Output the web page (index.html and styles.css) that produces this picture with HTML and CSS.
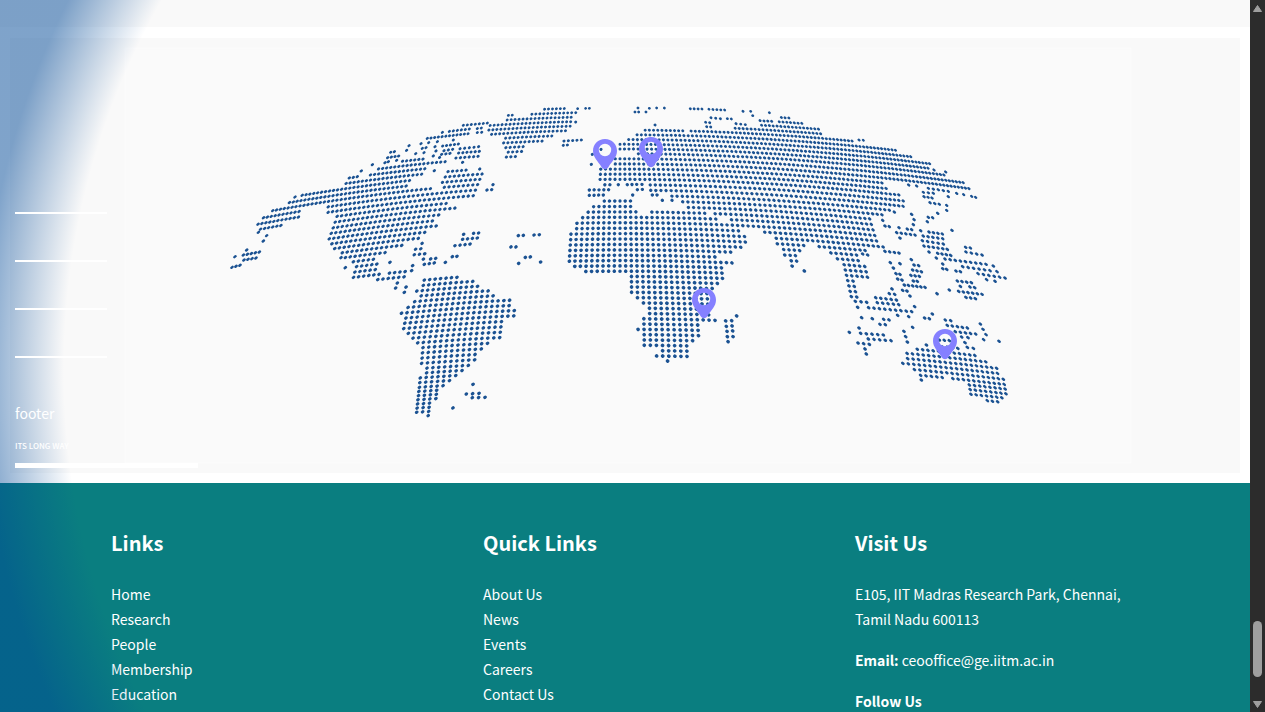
FILE: index.html
```html
<!DOCTYPE html>
<html lang="en">
<head>
<meta charset="utf-8">
<title>Global Engagement</title>
<link rel="stylesheet" href="styles.css">
</head>
<body>
<div class="window">
  <div class="page">
    <main class="content">
      <div class="previous-section"></div>
      <section class="map-section" aria-label="Our locations">
        <svg class="map" viewBox="10 38 1230 435" role="img" aria-label="World map">
          <rect class="map-inner" x="125" y="48" width="1006" height="415"/>
          <g id="dots" class="dots"></g>
          <defs>
            <path id="pin" fill-rule="evenodd" d="M0-12C7-12 12-6.600 12 0C12 6.500 7 10 3.500 16C1.500 19 -1.500 19 -3.500 16C-7 10 -12 6.500 -12 0C-12-6.600 -7-12 0-12ZM0-7.200A6.200 6.200 0 1 0 0 5.200A6.200 6.200 0 1 0 0-7.200Z"/>
          </defs>
          <g class="pins">
            <use href="#pin" x="605" y="151"/>
            <use href="#pin" x="651" y="149"/>
            <use href="#pin" x="704" y="300"/>
            <use href="#pin" x="945" y="341"/>
          </g>
        </svg>
      </section>
    </main>
    <footer class="footer">
      <section class="column">
        <h2>Links</h2>
        <ul>
          <li><a href="#">Home</a></li>
          <li><a href="#">Research</a></li>
          <li><a href="#">People</a></li>
          <li><a href="#">Membership</a></li>
          <li><a href="#">Education</a></li>
        </ul>
      </section>
      <section class="column">
        <h2>Quick Links</h2>
        <ul>
          <li><a href="#">About Us</a></li>
          <li><a href="#">News</a></li>
          <li><a href="#">Events</a></li>
          <li><a href="#">Careers</a></li>
          <li><a href="#">Contact Us</a></li>
        </ul>
      </section>
      <section class="column">
        <h2>Visit Us</h2>
        <p>E105, IIT Madras Research Park, Chennai,<br>Tamil Nadu 600113</p>
        <p><strong>Email:</strong> <a href="mailto:ceooffice@ge.iitm.ac.in">ceooffice@ge.iitm.ac.in</a></p>
        <p><strong>Follow Us</strong></p>
      </section>
    </footer>
    <aside class="drawer">
      <div class="rule"></div>
      <div class="rule"></div>
      <div class="rule"></div>
      <div class="rule"></div>
      <p class="drawer-title">footer</p>
      <p class="drawer-note">ITS LONG WAY</p>
      <div class="bar"></div>
    </aside>
  </div>
  <div class="scrollbar" aria-hidden="true">
    <svg class="arrow" viewBox="0 0 15 15"><path d="M7.500 5.500L11.500 11.500H3.500Z"/></svg>
    <div class="track"><div class="thumb"></div></div>
    <svg class="arrow" viewBox="0 0 15 15"><path d="M7.500 10.500L3.500 4.500H11.500Z"/></svg>
  </div>
</div>
<script src="map.js"></script>
</body>
</html>
```

FILE: styles.css
```css
* {
  box-sizing: border-box;
}

body {
  margin: 0;
  background: #fff;
  color: #fff;
  font: 14px/25px "Noto Sans CJK SC", "Open Sans", sans-serif;
}

a {
  color: inherit;
  text-decoration: none;
}

.window {
  display: grid;
  grid-template-columns: 1fr 15px;
  height: 100vh;
  overflow: hidden;
}

.page {
  position: relative;
  display: flex;
  flex-direction: column;
  min-height: 0;
  overflow: hidden;
}

.content {
  flex: none;
}

.previous-section {
  height: 27px;
  background: #f9f9f9;
}

.map-section {
  padding: 11px 10px 10px;
}

.map {
  display: block;
  width: 100%;
  background: #f9f9f9;
}

.map-inner {
  fill: #fafafa;
  stroke: #fcfcfc;
}

.dots {
  fill: none;
  stroke: #1b5292;
  stroke-linecap: round;
}

.pins {
  fill: #8580ff;
}

.footer {
  flex: 1 0 auto;
  display: grid;
  grid-template-columns: repeat(3, 1fr);
  padding: 46px 23px 0 111px;
  background: #0a7e80;
}

.column h2 {
  margin: 0 0 25px;
  font-size: 20px;
  line-height: 28px;
  font-weight: 700;
}

.column ul {
  margin: 0;
  padding: 0;
  list-style: none;
}

.column p {
  margin: 0 0 16px;
}

.drawer {
  position: absolute;
  inset: 0;
  padding: 212px 15px 0;
  pointer-events: none;
  background: radial-gradient(circle at 811px 370px, rgba(0, 72, 150, 0) 747px, rgba(0, 72, 150, .5) 830px);
}

.rule {
  width: 92px;
  height: 2px;
  margin-bottom: 46px;
  background: #fff;
}

.drawer-title {
  margin: 0 0 18px;
  font-size: 14px;
  line-height: 18px;
}

.drawer-note {
  margin: 0 0 11px;
  font-size: 8px;
  line-height: 12px;
  font-weight: 500;
}

.bar {
  width: 183px;
  height: 5px;
  background: #fff;
}

.scrollbar {
  display: flex;
  flex-direction: column;
  background: #2c2c2c;
}

.arrow {
  width: 15px;
  height: 15px;
  fill: #9f9f9f;
  stroke: #9f9f9f;
  stroke-linejoin: round;
}

.track {
  flex: 1;
  display: flex;
  flex-direction: column;
  justify-content: flex-end;
  padding: 0 3px 20px;
}

.thumb {
  height: 56px;
  border-radius: 5px;
  background: #9f9f9f;
}
```

FILE: map.js
```js
// Land outlines and islands, in thirds of a map unit from each region's origin.
// land: closed outlines. runs: rows of dots [x1, y1, x2, y2, count]. spots: single dots.
const regions = [
  {
    name: 'North America', x: 220, y: 90,
    land: [
      [105,398,105,420,135,418,190,408,190,392,240,382,240,362,312,350,318,380,345,380,335,420,322,445,335,480,365,485,365,495,385,510,405,540,398,565,478,558,470,500,525,475,605,450,600,435,650,410,640,390,660,375,655,362,720,358,715,350,695,345,690,330,775,325,770,300,785,290,795,250,785,225,775,222,765,240,720,240,720,228,680,232,665,260,660,300,645,300,645,285,565,290,580,265,612,250,605,238,670,228,680,210,660,200,610,215,620,200,560,205,530,222,470,235,450,255,380,270,365,285,320,300,245,315,200,340,150,365,130,380],
      [600,452,583,470,573,505,610,510,618,480,608,455],
      [468,574,562,567,555,540,525,535,525,545,470,556]
    ],
    runs: [
      [70,495,118,486,5],[72,510,108,504,4],[36,532,60,526,3],[613,523,643,519,3],[632,507,647,505,2],[697,500,711,499,2],
      [705,467,750,462,4],[728,448,772,444,4],[761,430,776,429,2],[801,300,815,299,2],[388,264,412,260,3],[424,243,434,241,2],
      [495,218,505,215,2],[503,203,536,198,4],[512,187,523,185,2],[530,211,541,210,2],[607,175,618,173,2],[622,145,744,131,12],
      [688,124,748,117,6],[730,106,802,99,7],[772,128,838,122,6],[772,116,784,114,2],[668,168,715,162,5],[672,182,698,178,3],
      [665,193,690,190,3],[720,176,776,170,5],[716,189,778,184,6],[708,204,774,199,6]
    ],
    spots: [80,480,45,500,130,453,140,437,150,422,115,427,175,415,225,321,363,503,376,533,510,517,578,527,575,542,532,579,527,594,558,591,676,517,731,433,819,284,643,242,457,224,560,181,567,167,587,191,603,161,612,188,667,127,700,150,688,160,652,155,648,183,640,198,645,170,626,158,728,217]
  },
  {
    name: 'Greenland and Atlantic', x: 390, y: 90,
    land: [
      [298,98,350,90,350,76,380,75,385,82,410,80,425,60,442,60,455,65,455,56,523,55,525,65,567,65,565,75,545,80,550,90,535,128,490,135,490,145,440,160,405,170,400,185,380,190,375,210,353,210,340,180,340,150,330,135,260,132,290,120]
    ],
    runs: [[587,55,598,55,2],[522,153,574,150,5],[520,166,532,165,2],[385,437,400,436,2],[432,435,448,434,2],[363,471,378,471,2],[406,502,421,501,2],[598,300,656,299,5],[598,316,640,315,4]],
    spots: [563,56,557,96,386,520,452,516,607,193,604,223,633,178]
  },
  {
    name: 'Eurasia and Africa', x: 560, y: 90,
    land: [
      [115,232,155,230,160,200,225,200,225,185,180,182,170,156,195,155,195,142,222,138,222,128,245,126,245,114,330,114,375,116,378,128,393,128,393,116,440,118,520,118,525,108,560,105,600,105,590,90,620,90,640,95,655,95,655,80,682,82,725,100,780,118,790,133,832,138,890,155,990,173,1050,198,1118,220,1112,238,1185,266,1220,283,1232,304,1200,304,1100,285,1050,275,975,270,980,295,1025,310,1030,330,1055,345,1010,358,970,365,980,382,930,387,950,410,960,450,974,472,925,475,930,494,885,498,915,525,925,562,890,564,885,580,903,622,865,622,852,580,860,550,845,522,845,508,810,504,800,480,765,472,760,460,740,455,735,482,703,487,717,527,693,530,670,502,660,478,638,450,635,430,600,425,590,410,520,408,515,392,470,375,375,350,360,322,325,318,300,305,268,303,265,275,150,275,150,290,128,290,113,258],
      [22,518,25,430,45,410,65,375,95,345,140,326,212,326,214,358,240,357,243,368,275,368,275,358,375,358,470,375,490,395,540,412,557,430,557,455,545,472,520,487,472,490,475,508,527,515,495,537,502,566,466,588,455,600,460,660,468,697,430,702,430,725,400,750,397,772,384,805,330,808,325,817,315,808,276,808,276,792,295,780,252,772,252,727,234,725,234,683,252,680,250,635,235,625,198,596,200,560,185,548,140,550,85,548,50,532]
    ],
    runs: [[202,284,230,283,3],[232,299,247,298,2],[277,315,291,315,2],[225,66,236,66,2],[391,56,426,57,4],[447,58,494,60,5],[453,83,481,86,3],[502,86,514,87,2],[437,97,449,98,2],[440,110,452,111,2],[528,101,556,104,3],[285,798,378,799,6],[122,545,139,544,2]],
    spots: [175,284,246,283,218,315,307,331,336,331,258,66,234,54,268,55,290,54,313,54,285,105,549,64,572,64,578,77,628,68,323,813,88,545,190,545,208,593]
  },
  {
    name: 'East Asia', x: 780, y: 120,
    runs: [
      [237,60,250,61,2],[575,229,587,232,2],[430,217,460,220,3],[432,230,456,234,3],[450,248,478,253,3],[445,292,458,293,2],
      [445,205,505,214,5],[315,318,328,320,2],[382,327,395,329,2],[350,338,405,345,5],[447,336,487,342,4],[415,346,488,356,6],[427,362,490,372,5],
      [432,378,502,388,6],[473,400,512,406,4],[557,382,571,384,2],[558,396,606,405,4],[495,417,618,433,9],[548,440,630,452,6],
      [488,446,500,448,2],[528,453,541,455,2],[594,461,675,474,6],[315,394,357,399,4],[402,435,416,437,2],[398,450,424,455,3],
      [348,461,360,463,2],[393,466,418,469,3],[373,495,435,502,6],[400,483,412,484,2],[368,511,381,513,2],[532,483,574,488,4],
      [570,501,584,503,2],[536,514,606,523,6],[558,532,586,536,3],[248,402,263,405,2]
    ],
    spots: [351,90,462,150,497,156,530,220,551,224,386,195,410,198,505,230,500,256,500,271,473,280,442,305,395,283,402,299,400,314,516,331,343,276,308,301,357,323,422,332,360,354,447,396,469,414,488,432,640,438,651,455,620,479,645,484,331,428,360,431,394,419,340,444,353,477,366,480,390,528,336,507,541,499,471,521,508,510,73,453]
  },
  {
    name: 'Oceania', x: 830, y: 240,
    land: [
      [235,330,285,313,310,318,380,318,400,333,440,335,445,350,480,356,480,375,510,388,520,410,538,455,525,475,510,487,435,477,410,458,405,432,365,427,355,412,340,424,275,418,270,432,255,400,235,380,210,365,228,348]
    ],
    runs: [
      [56,166,86,168,3],[76,184,110,187,3],[137,173,199,180,5],[178,161,194,163,2],[142,188,206,194,5],
      [116,203,245,215,9],[161,238,177,240,2],[150,253,166,254,2],[92,280,160,285,5],[115,297,183,302,5],[84,309,118,313,3],
      [284,234,298,236,2],[346,240,362,242,2],[352,256,412,264,5],[376,275,437,282,5],[395,291,414,293,2],[412,322,430,325,2],[328,300,358,302,3]
    ],
    spots: [83,202,186,146,254,200,203,226,236,230,95,233,127,236,87,264,58,277,105,327,109,342,222,274,227,290,232,306,248,262,307,222,239,167,405,308,451,252,459,268,468,284,461,299,507,304,299,313]
  },
  {
    name: 'South America', x: 380, y: 260,
    land: [
      [125,58,235,48,240,60,280,62,295,80,325,92,340,108,350,120,405,120,402,145,417,155,395,178,380,180,372,242,335,245,330,258,290,290,290,302,250,335,210,365,190,384,170,397,168,427,150,440,148,467,118,467,98,457,106,350,130,345,130,320,113,314,123,260,150,252,110,257,95,237,68,210,72,180,63,160,85,140,90,122,110,112,98,95,122,85]
    ],
    runs: [[259,402,297,400,3],[277,413,315,412,3]],
    spots: [279,373,219,444,79,81,73,97,47,84,52,68,411,155,106,452,106,438]
  },
  {
    name: 'Madagascar', x: 600, y: 250,
    runs: [[377,213,395,212,2],[379,229,396,228,2],[381,244,398,243,2],[382,260,399,260,2]],
    spots: [410,198,384,275]
  }
];

const CENTER = 620;
const CURVE = 108;

function between(stops, value) {
  for (let i = 1; i < stops.length; i++) {
    const [a, from] = stops[i - 1];
    const [b, to] = stops[i];
    if (value <= b) return from + (to - from) * (value - a) / (b - a);
  }
  return stops[stops.length - 1][1];
}

const rowY = [[-14, 46], [0, 107.7], [5, 130], [10, 153.7], [15, 179.3], [29, 255.3], [49, 361], [53, 380], [62, 418]];
const gap = [[-14, 3.4], [5, 4.2], [18, 5.2], [29, 5.6], [44, 6.05], [62, 6.3]];
const bendWest = [[-14, 0.00026], [20, 0.00026], [62, 0.00016]];
const bendEast = [[-14, 0.00021], [20, 0.0002], [62, 0.00014]];

function place(row, col) {
  const x = CENTER + between(gap, row) * CURVE * Math.sin(col / CURVE);
  const bend = between(col < 0 ? bendWest : bendEast, row);
  return [x, between(rowY, row) + bend * (x - CENTER) ** 2];
}

function inside(outline, x, y) {
  let hit = false;
  for (let i = 0, j = outline.length - 2; i < outline.length; j = i, i += 2) {
    const [xi, yi, xj, yj] = [outline[i], outline[i + 1], outline[j], outline[j + 1]];
    if ((yi > y) !== (yj > y) && x < (xj - xi) * (y - yi) / (yj - yi) + xi) hit = !hit;
  }
  return hit;
}

const paths = new Map();
const placed = [];

// Dots lean along their meridian and shrink toward the pole and the sides.
function dot(x, y) {
  placed.push([x, y]);
  const lean = (CENTER - x) / 390;
  const size = between([[105, 2.7], [180, 3.2], [270, 3.6], [420, 3.6]], y) * (1 - 0.32 * Math.abs(lean));
  const width = size.toFixed(1);
  const dx = lean * 0.6;
  const dy = -Math.abs(lean) * 0.5;
  const d = `M${(x - dx).toFixed(1)} ${(y - dy).toFixed(1)}l${(dx * 2).toFixed(2)} ${(dy * 2 - 0.01).toFixed(2)}`;
  paths.set(width, (paths.get(width) || '') + d);
}

const outlines = regions.flatMap(r => (r.land || []).map(l => l.map((v, i) => (i % 2 ? r.y : r.x) + v / 3)));
for (let row = -14; row <= 62; row++) {
  for (let col = -120; col <= 120; col++) {
    const [x, y] = place(row, col);
    if (outlines.some(o => inside(o, x, y))) dot(x, y);
  }
}

function single(x, y) {
  if (!placed.some(([a, b]) => Math.hypot(a - x, b - y) < 3.4)) dot(x, y);
}

for (const r of regions) {
  for (const [x1, y1, x2, y2, n] of r.runs || []) {
    for (let i = 0; i < n; i++) {
      const t = i / (n - 1);
      single(r.x + (x1 + (x2 - x1) * t) / 3, r.y + (y1 + (y2 - y1) * t) / 3);
    }
  }
  for (let i = 0; i < (r.spots || []).length; i += 2) {
    single(r.x + r.spots[i] / 3, r.y + r.spots[i + 1] / 3);
  }
}

const layer = document.getElementById('dots');
for (const [width, d] of paths) {
  const path = document.createElementNS('http://www.w3.org/2000/svg', 'path');
  path.setAttribute('stroke-width', width);
  path.setAttribute('d', d);
  layer.appendChild(path);
}
```
